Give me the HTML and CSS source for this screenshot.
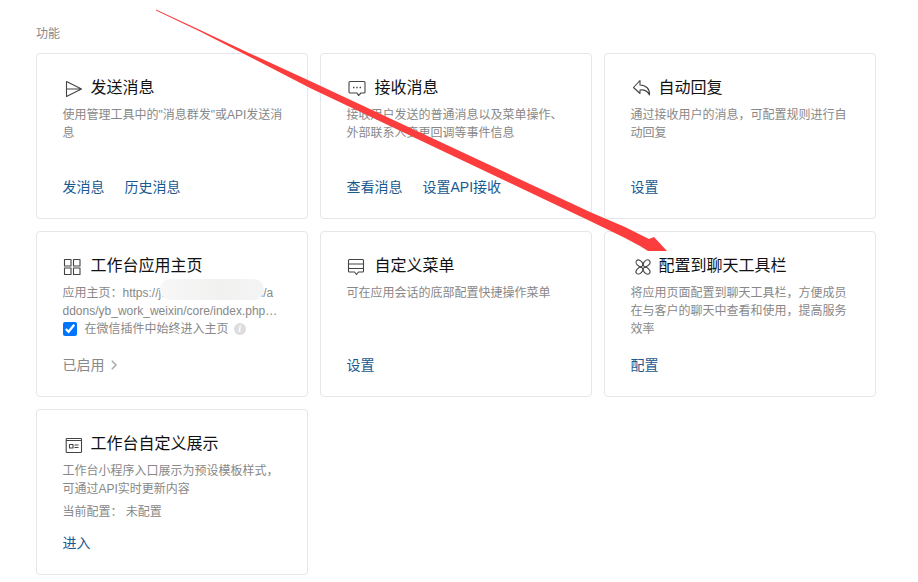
FILE: index.html
```html
<!DOCTYPE html>
<html lang="zh-CN">
<head>
  <meta charset="UTF-8" />
  <title>功能</title>
  <link rel="stylesheet" href="styles.css">
</head>
<body>
  <div class="page">
    <div class="section-title">功能</div>
    <div class="cards">

      <div class="card">
        <h3 class="card-title">
          <svg class="icon" viewBox="0 0 18 18"><path d="M2.500 2.500v15L17.500 10z M2.500 10h15"/></svg>
          发送消息
        </h3>
        <p class="desc">使用管理工具中的"消息群发"或API发送消息</p>
        <div class="links"><a>发消息</a><a>历史消息</a></div>
      </div>

      <div class="card">
        <h3 class="card-title">
          <svg class="icon" viewBox="0 0 18 18"><path d="M2 2.500h14a1 1 0 0 1 1 1v9.500a1 1 0 0 1-1 1h-3l-2.500 2.500-1.500-2.500H2a1 1 0 0 1-1-1V3.500a1 1 0 0 1 1-1z"/><path class="dots" d="M5 8.500h1.400M8.300 8.500h1.400M11.600 8.500H13"/></svg>
          接收消息
        </h3>
        <p class="desc">接收用户发送的普通消息以及菜单操作、外部联系人变更回调等事件信息</p>
        <div class="links"><a>查看消息</a><a>设置API接收</a></div>
      </div>

      <div class="card">
        <h3 class="card-title">
          <svg class="icon" viewBox="0 0 18 18"><path d="M8 1.500L1.500 8.500 8 14.500V11c4-.5 7.500 1 9.500 5 .5-6-3.500-10-9.500-10z"/></svg>
          自动回复
        </h3>
        <p class="desc">通过接收用户的消息，可配置规则进行自动回复</p>
        <div class="links"><a>设置</a></div>
      </div>

      <div class="card">
        <h3 class="card-title">
          <svg class="icon" viewBox="0 0 18 18"><path d="M.5 2.500h6.500V9H.5z M9.500 2.500H16V9H9.500z M.5 11H7v6.500H.5z M9.500 11H16v6.500H9.500z"/></svg>
          工作台应用主页
        </h3>
        <p class="desc">应用主页：https://j.example-weixin.cn/a<br>ddons/yb_work_weixin/core/index.php…</p>
        <label class="check-row">
          <input type="checkbox" checked>
          <span>在微信插件中始终进入主页</span>
          <i class="info">i</i>
        </label>
        <div class="links">
          <a class="muted">已启用<svg class="chevron" viewBox="0 0 6 10"><path d="M.8 .8L5 5 .8 9.200"/></svg></a>
        </div>
        <div class="blur"></div>
      </div>

      <div class="card">
        <h3 class="card-title">
          <svg class="icon" viewBox="0 0 18 18"><path d="M1.500 2.500h13a1 1 0 0 1 1 1V14a1 1 0 0 1-1 1h-4l-2 2.500-2-2.500h-5a1 1 0 0 1-1-1V3.500a1 1 0 0 1 1-1z M.5 7h15M.5 11.500h15"/></svg>
          自定义菜单
        </h3>
        <p class="desc">可在应用会话的底部配置快捷操作菜单</p>
        <div class="links"><a>设置</a></div>
      </div>

      <div class="card">
        <h3 class="card-title">
          <svg class="icon" viewBox="0 0 18 18">
            <ellipse cx="7.400" cy="6.300" rx="3.900" ry="2.700" transform="rotate(45 7.400 6.300)"/>
            <ellipse cx="14.600" cy="6.300" rx="3.900" ry="2.700" transform="rotate(-45 14.600 6.300)"/>
            <ellipse cx="7.400" cy="13.700" rx="3.900" ry="2.700" transform="rotate(-45 7.400 13.700)"/>
            <ellipse cx="14.600" cy="13.700" rx="3.900" ry="2.700" transform="rotate(45 14.600 13.700)"/>
          </svg>
          配置到聊天工具栏
        </h3>
        <p class="desc">将应用页面配置到聊天工具栏，方便成员在与客户的聊天中查看和使用，提高服务效率</p>
        <div class="links"><a>配置</a></div>
      </div>

      <div class="card">
        <h3 class="card-title">
          <svg class="icon" viewBox="0 0 18 18"><path d="M3 3.500h14a.8.8 0 0 1 .5.8v12.400a.8.8 0 0 1-.8.8H3a.8.8 0 0 1-.8-.8V4.300a.8.8 0 0 1 .8-.8z M2.200 5.500h15.300 M5.500 9.500H9V13H5.500z M10.500 10h4M10.500 12.500h4"/></svg>
          工作台自定义展示
        </h3>
        <p class="desc">工作台小程序入口展示为预设模板样式，可通过API实时更新内容</p>
        <p class="desc current">当前配置： 未配置</p>
        <div class="links"><a>进入</a></div>
      </div>

    </div>
  </div>

  <svg class="annotation" viewBox="0 0 918 582" width="918" height="582">
    <polygon points="156,9.500 200,30 250,53.500 310,81 590,212 625,227 649,239 654,237 667,251 648,251 640,246 625,238 590,221 310,88 250,57 200,31.500 156,10.500"/>
  </svg>
</body>
</html>
```

FILE: styles.css
```css
* {
  box-sizing: border-box;
  margin: 0;
  padding: 0;
}

body {
  font-family: "Liberation Sans", "Noto Sans CJK SC", sans-serif;
  background: #fff;
  color: #888;
  font-size: 12px;
  position: relative;
  height: 582px;
  overflow: hidden;
}

.page {
  padding: 27px 42px 0 36px;
}

.section-title {
  font-size: 12px;
  line-height: 14px;
  color: #888;
  margin-bottom: 12px;
}

.cards {
  display: grid;
  grid-template-columns: repeat(3, 272px);
  grid-auto-rows: 166px;
  gap: 12px;
}

.card {
  position: relative;
  border: 1px solid #e4e6e9;
  border-radius: 4px;
  padding: 24px 22px 22px 25.500px;
  display: flex;
  flex-direction: column;
  height: 166px;
}

.card-title {
  display: flex;
  align-items: center;
  gap: 8.500px;
  font-size: 16px;
  font-weight: normal;
  line-height: 20px;
  color: #111;
  margin-bottom: 8px;
  margin-left: 1.500px;
}

.icon {
  width: 18px;
  height: 18px;
  flex: none;
  fill: none;
  stroke: #444;
  stroke-width: 1.1;
  stroke-linejoin: round;
  overflow: visible;
}

.icon .dots {
  stroke-width: 1.400;
}

.desc {
  line-height: 18px;
  color: #888;
}

.current {
  margin-top: 5px;
}

.check-row {
  display: flex;
  align-items: center;
  line-height: 18px;
  color: #888;
}

.check-row input {
  width: 14px;
  height: 14px;
  margin-right: 8px;
  accent-color: #0075ff;
}

.info {
  width: 12px;
  height: 12px;
  margin-left: 5px;
  border-radius: 50%;
  background: #ddd;
  color: #fff;
  font: italic bold 10px/12px "Liberation Serif", serif;
  text-align: center;
}

.links {
  margin-top: auto;
  display: flex;
  gap: 20px;
  font-size: 14px;
  line-height: 18px;
  color: #18598f;
}

.muted {
  display: flex;
  align-items: center;
  color: #888;
}

.chevron {
  width: 6px;
  height: 10px;
  margin-left: 6px;
  fill: none;
  stroke: #aaa;
  stroke-width: 1.500;
}

.blur {
  position: absolute;
  left: 123px;
  top: 47px;
  width: 104px;
  height: 21px;
  border-radius: 10px;
  background: linear-gradient(90deg, #f7f7f7, #f1f1f0 60%, #f3f4f4);
}

.annotation {
  position: absolute;
  left: 0;
  top: 0;
  pointer-events: none;
}

.annotation polygon {
  fill: #fb3d3d;
}
```
